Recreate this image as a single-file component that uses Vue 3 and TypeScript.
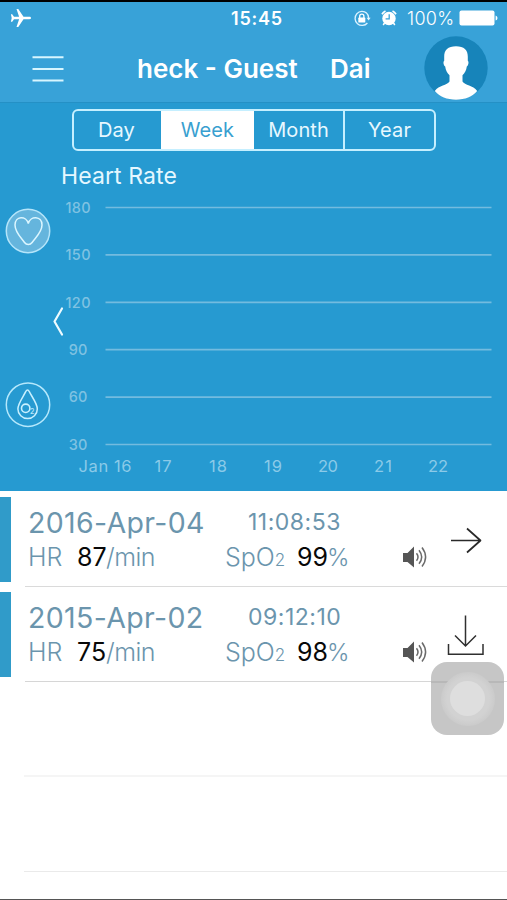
<script setup lang="ts">
interface Reading {
  date: string
  time: string
  hr: number
  spo2: number
  action: 'open' | 'download'
}

const tabs: string[] = ['Day', 'Week', 'Month', 'Year']
const activeTab = 'Week'

const levels = [180, 150, 120, 90, 60, 30].map((value, i) => ({
  value,
  y: 19.5 + i * 47.4,
}))

const days = [
  { label: 'Jan 16', x: 105, width: 53 },
  { label: '17', x: 163, width: 17 },
  { label: '18', x: 218, width: 18 },
  { label: '19', x: 273, width: 18 },
  { label: '20', x: 328, width: 20 },
  { label: '21', x: 383, width: 18 },
  { label: '22', x: 438, width: 20 },
]

const readings: Reading[] = [
  { date: '2016-Apr-04', time: '11:08:53', hr: 87, spo2: 99, action: 'open' },
  { date: '2015-Apr-02', time: '09:12:10', hr: 75, spo2: 98, action: 'download' },
]
</script>

<template>
  <div class="phone">
    <header class="header">
      <div class="status">
        <svg class="plane" width="22" height="20" viewBox="0 0 22 20">
          <path d="M21 10c0-.8-.7-1.2-1.5-1.2h-6L8.3 1H6.5l2.6 7.8H4L2.2 6.2H.9L1.7 10 .9 13.8h1.3L4 11.2h5.1L6.500 19h1.800l5.200-7.800h6c.8 0 1.500-.4 1.500-1.200z" fill="#fff" />
        </svg>
        <span class="clock">15:45</span>
        <div class="indicators">
          <svg class="lock" width="18" height="17" viewBox="0 0 18 17">
            <path d="M13.800 3.300A7 7 0 1 0 14.400 13M13.300 2.800a7 7 0 0 1 2.400 5.400" fill="none" stroke="#d9f2ff" stroke-width="1.300" />
            <path d="M13.600 7.700h4l-2 2.900z" fill="#e5f6ff" />
            <rect x="5.300" y="7.600" width="7" height="5" rx=".6" fill="#fff" />
            <path d="M6.700 8V6.300a2.100 2.100 0 0 1 4.200 0V8" fill="none" stroke="#fff" stroke-width="1.300" />
          </svg>
          <svg class="alarm" width="16" height="16" viewBox="0 0 16 16">
            <circle cx="8" cy="8.500" r="6.700" fill="#fff" />
            <path d="M1 4.200A8 8 0 0 1 4.500 1M15 4.200A8 8 0 0 0 11.500 1" stroke="#fff" stroke-width="1.700" fill="none" />
            <path d="M3.500 13l-1.300 2M12.500 13l1.300 2" stroke="#fff" stroke-width="1.500" />
            <path d="M8.200 4.200v4.600H4.600" stroke="#38a2d8" stroke-width="1.300" fill="none" />
          </svg>
          <span class="percent">100%</span>
          <svg class="battery" width="39" height="16" viewBox="0 0 39 16">
            <rect x=".5" y=".5" width="35" height="15" rx="2" fill="#fff" />
            <path d="M36.600 5.500q1.900.5 1.900 2.500t-1.900 2.500z" fill="#fff" />
          </svg>
        </div>
      </div>
      <div class="nav">
        <svg class="menu" width="32" height="28" viewBox="0 0 32 28">
          <path d="M.5 2.200h31M.5 14h31M.5 25.500h31" stroke="#d8f6ff" stroke-width="1.900" />
        </svg>
        <h1 class="title"><span class="name">heck - Guest</span><span class="name-end">Dai</span></h1>
        <svg class="avatar" width="64" height="64" viewBox="0 0 64 64">
          <circle cx="32" cy="32" r="31.700" fill="#1784ba" />
          <path d="M32 10.200c-8 0-12 4-11.800 10.500v4c-1.200.7-.8 4.600 1 5.800.5 4 2 6.300 4.300 8.800v6.200c-2.300 3.900-10.500 3.700-14.700 9.500C15.500 60.500 23 63.700 32 63.700s16.500-3.200 21.200-8.700c-4.200-5.800-12.400-5.600-14.700-9.500v-6.200c2.300-2.500 3.800-4.800 4.300-8.800 1.800-1.200 2.200-5.100 1-5.800v-4c.2-6.500-3.800-10.500-11.800-10.500z" fill="#fff" />
        </svg>
      </div>
    </header>

    <section class="panel">
      <nav class="tabs">
        <button v-for="tab in tabs" :key="tab" type="button" class="tab" :class="{ active: tab === activeTab }">{{ tab }}</button>
      </nav>
      <h2 class="metric">Heart Rate</h2>
      <svg class="chart" width="507" height="303" viewBox="0 0 507 303">
        <g v-for="level in levels" :key="level.value">
          <text class="level" x="78" :y="level.y + 5.300" text-anchor="middle" :textLength="level.value > 99 ? 25 : 18.500">{{ level.value }}</text>
          <path class="gridline" :d="`M105.500 ${level.y}H491.500`" />
        </g>
        <text v-for="day in days" :key="day.label" class="day" :x="day.x" y="283.500" text-anchor="middle" :textLength="day.width">{{ day.label }}</text>

        <circle cx="28" cy="43" r="21.700" fill="#65b5dd" stroke="#b5e5fa" stroke-width="1.500" />
        <path d="M28.300 35.500c-2-8-13.300-8-13.300 1.500 0 7 5.500 12 9.500 17.500 2 2.800 5.600 2.800 7.600 0C36 49 42 44 42 37c0-9.500-11.700-9.500-13.700-1.500z" fill="none" stroke="#dcf6ff" stroke-width="1.500" />

        <circle cx="28" cy="216.700" r="21.700" fill="none" stroke="#b5e8fc" stroke-width="1.500" />
        <path d="M25.700 203.700q1.800-3.200 3.600 0c2.700 5.300 8 12 8 17.200a9.700 9.700 0 0 1-19.400 0c0-5.200 5.100-11.900 7.800-17.200z" fill="none" stroke="#c8f0ff" stroke-width="1.500" />
        <circle cx="25.700" cy="220.300" r="4.200" fill="none" stroke="#c8f0ff" stroke-width="1.600" />
        <text class="oxygen" x="30" y="225.500">2</text>

        <path d="M62 120.500L54.500 133.500 62 146.500" fill="none" stroke="#eefbff" stroke-width="2.200" stroke-linecap="round" stroke-linejoin="round" />
      </svg>
    </section>

    <main class="list">
      <article v-for="item in readings" :key="item.date" class="row">
        <div class="marker"></div>
        <div class="content">
          <div class="info">
            <div class="line top">
              <span class="date">{{ item.date }}</span>
              <span class="time">{{ item.time }}</span>
            </div>
            <div class="line bottom">
              <span class="hr">HR</span>
              <span class="value hr-value">{{ item.hr }}</span>
              <span class="unit">/min</span>
              <span class="spo">SpO<small>2</small></span>
              <span class="value spo-value">{{ item.spo2 }}</span>
              <span class="pct">%</span>
            </div>
          </div>
          <svg class="speaker" width="26" height="24" viewBox="0 0 26 24">
            <path d="M1 8h4.500L12 1.500v21L5.500 17H1z" fill="#555" />
            <path d="M14.500 8.200q3 3.800 0 7.600M17 5.200q5.400 6.800 0 13.600M20 2.500q7.200 9.500 0 19" fill="none" stroke="#6b6b6b" stroke-width="1.500" />
          </svg>
          <svg v-if="item.action === 'open'" class="action" width="40" height="46" viewBox="0 0 40 46">
            <path d="M4 22.500h29.500M20 10.500l13.500 12L20 34.500" fill="none" stroke="#292929" stroke-width="1.700" stroke-linejoin="round" />
          </svg>
          <svg v-else class="action" width="40" height="46" viewBox="0 0 40 46">
            <path d="M18.500 2.500v30.500M8 22.500L18.500 33l10.500-10.500M1.500 31v10.300H36V31" fill="none" stroke="#303030" stroke-width="1.500" />
          </svg>
        </div>
      </article>
      <div class="blank"></div>
      <div class="blank last"></div>
    </main>

    <div class="assistive"><i class="ring"><i class="dot"></i></i></div>
  </div>
</template>

<style>
body {
  margin: 0;
}
</style>

<style scoped>
* {
  box-sizing: border-box;
}
.phone {
  position: relative;
  width: 507px;
  height: 900px;
  overflow: hidden;
  background: #fff;
  border-top: 2px solid #000;
  border-bottom: 1px solid #555;
  font-family: Inter, "Liberation Sans", sans-serif;
}
.header {
  height: 101px;
  background: #38a2d8;
  border-bottom: 1px solid #2490c5;
}
.status {
  display: grid;
  grid-template-columns: 231px 130px 1fr;
  align-items: center;
  height: 32px;
  color: #fff;
}
.plane {
  margin: 0 0 1px 10px;
}
.clock {
  font-size: 18px;
  font-weight: 600;
  letter-spacing: .8px;
}
.indicators {
  display: flex;
  align-items: center;
  white-space: nowrap;
}
.lock {
  margin-left: -8px;
}
.alarm {
  margin-left: 10px;
}
.percent {
  width: 52px;
  margin-left: 10px;
  font-size: 18px;
  font-weight: 300;
  letter-spacing: .3px;
}
.battery {
  flex: none;
}
.nav {
  display: grid;
  grid-template-columns: 105px 287px 64px;
  padding: 2px 0 0 32px;
  height: 67px;
  align-items: center;
}
.title {
  display: flex;
  margin: 0;
  color: #fff;
  font-size: 26px;
  line-height: 30px;
  font-weight: 600;
  white-space: nowrap;
}
.name {
  width: 193px;
}
.avatar {
  margin-top: -2px;
}
.panel {
  height: 388px;
  padding-top: 6px;
  background: #269ad1;
}
.tabs {
  display: grid;
  grid-template-columns: 87px 93px 89px 1fr;
  width: 364px;
  height: 42px;
  margin-left: 72px;
  border: 2px solid #c5efff;
  border-radius: 6px;
  overflow: hidden;
}
.tab {
  padding: 0;
  border: 0;
  background: none;
  color: #e7f8ff;
  font: 400 20px Inter, "Liberation Sans", sans-serif;
  letter-spacing: .1px;
}
.tab:first-child {
  padding-right: 2px;
}
.tab:last-child {
  border-left: 2px solid #c5efff;
}
.tab.active {
  background: #fff;
  color: #399fd0;
}
.metric {
  height: 37px;
  margin: 0 0 0 61px;
  padding-top: 12px;
  color: #e5f7ff;
  font-size: 23px;
  line-height: 27px;
  font-weight: 400;
  letter-spacing: .1px;
}
.chart {
  display: block;
}
.level {
  font-size: 14.500px;
  font-weight: 500;
  fill: #7fc2e2;
}
.gridline {
  stroke: #73bbdf;
  stroke-width: 1.700;
}
.day {
  font-size: 16.500px;
  fill: #8bcae8;
}
.oxygen {
  font-size: 7px;
  font-weight: 600;
  fill: #b5e5fa;
}
.list {
  padding-top: 1px;
}
.row {
  display: flex;
  height: 95px;
}
.marker {
  width: 11px;
  height: 85px;
  margin: 5px 14px 0 0;
  background: #309bc9;
}
.content {
  display: flex;
  flex: 1;
  border-bottom: 1.500px solid #dadada;
}
.row + .row .content {
  border-color: #d6d6d6;
}
.info {
  width: 377px;
  padding-top: 14px;
}
.line {
  display: grid;
  padding-left: 3px;
  align-items: baseline;
  color: #6b95ad;
  white-space: nowrap;
}
.top {
  grid-template-columns: 220px 1fr;
  align-items: start;
  height: 34px;
  line-height: 34px;
}
.bottom {
  grid-template-columns: 49px 29px 119px 72px 31px 1fr;
  height: 35px;
  line-height: 34px;
  font-size: 25px;
  font-weight: 350;
}
.date {
  font-size: 28.500px;
  letter-spacing: .35px;
}
.time {
  font-size: 23px;
  line-height: 33px;
  letter-spacing: .5px;
}
.value {
  color: #080808;
  font-weight: 400;
}
.unit {
  letter-spacing: -.5px;
}
.spo small {
  font-size: 17px;
}
.pct {
  font-size: 24px;
  margin-left: -1px;
}
.speaker {
  margin-top: 53px;
}
.action {
  margin: 26px 0 0 19px;
}
.blank {
  height: 95px;
  margin-left: 24px;
  border-bottom: 2px solid #f5f5f5;
}
.last {
  border-bottom: 1px solid #eaeaea;
}
.assistive {
  position: absolute;
  left: 431px;
  top: 660px;
  display: grid;
  place-items: center;
  width: 73px;
  height: 73px;
  border-radius: 16px;
  background: linear-gradient(transparent 19px, #b8b8b8 19px, #b8b8b8 21px, transparent 21px), #c6c6c6;
}
.ring {
  display: grid;
  place-items: center;
  width: 54px;
  height: 54px;
  border-radius: 50%;
  background: radial-gradient(circle, #d2d2d2 55%, #cbcbcb 70%);
}
.dot {
  width: 35px;
  height: 35px;
  border-radius: 50%;
  background: #dedede;
}
</style>
